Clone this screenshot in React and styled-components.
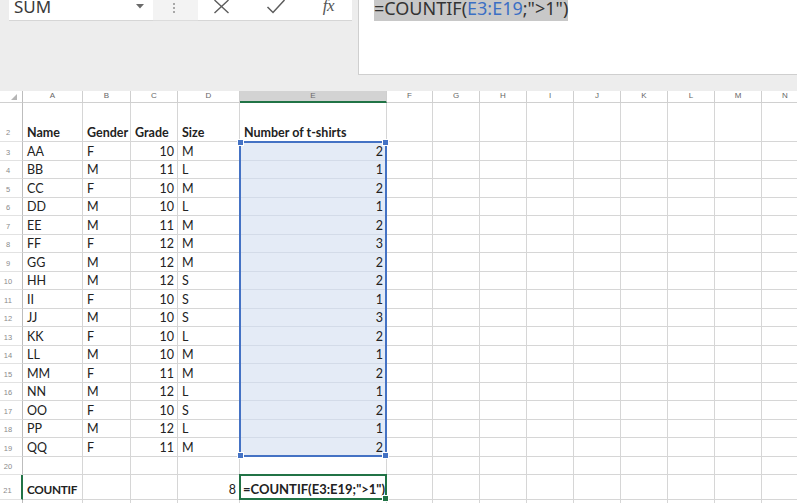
import React from 'react';
import styled, { createGlobalStyle } from 'styled-components';

const Global = createGlobalStyle`
  html, body { margin: 0; padding: 0; background: #fff; overflow: hidden; }
  body { width: 797px; height: 503px; font-family: Lato, "Liberation Sans", sans-serif; }
`;

const Page = styled.div`
  width: 797px;
  height: 503px;
  overflow: hidden;
  background: #fff;
`;

const Toolbar = styled.div`
  display: flex;
  align-items: flex-start;
  background: #ededed;
  height: 99px;
  margin-top: -8px;
  padding-left: 9px;
  box-sizing: border-box;
`;

const NameBox = styled.div`
  width: 144px;
  height: 29px;
  background: #fff;
  border-bottom: 1px solid #d6d6d6;
  box-sizing: border-box;
  display: flex;
  align-items: center;
  justify-content: space-between;
  padding: 0 9px 0 5px;
  font-family: "Noto Sans", "Open Sans", sans-serif;
  font-size: 17px;
  color: #3a3a3a;
`;

const Grip = styled.div`
  width: 45px;
  height: 29px;
  background: #f3f3f3;
  border-bottom: 1px solid #dcdcdc;
  box-sizing: border-box;
  display: flex;
  flex-direction: column;
  align-items: center;
  justify-content: center;
  gap: 2px;
  padding: 4px 3px 0 0;
`;

const Dot = styled.span`
  width: 2px;
  height: 2px;
  background: #a8a8a8;
`;

const FuncBox = styled.div`
  width: 154px;
  height: 29px;
  background: #fff;
  border-bottom: 1px solid #d6d6d6;
  box-sizing: border-box;
  display: flex;
  align-items: center;
  justify-content: space-between;
  padding: 0 18px 0 15px;
  color: #5a5a5a;
`;

const Fx = styled.span`
  font-family: "Liberation Serif", "DejaVu Serif", serif;
  font-style: italic;
  font-size: 17px;
  color: #555;
  letter-spacing: -0.5px;
`;

const FormulaBox = styled.div`
  flex: 1;
  margin-left: 6px;
  height: 83px;
  background: #fff;
  border-left: 1px solid #cfcfcf;
  border-bottom: 1px solid #cfcfcf;
  box-sizing: border-box;
  padding: 7px 0 0 15px;
  font-family: "Noto Sans", "Open Sans", sans-serif;
  font-size: 18px;
  line-height: 18px;
  color: #333;
`;

const Selected = styled.span`
  background: #c8c8c8;
  padding-bottom: 1px;
`;

const Ref = styled.span`
  color: #3b6fc4;
`;

const Sheet = styled.div`
  position: relative;
  display: grid;
  grid-template-columns: 23px 60px 48px 47px 62px 147px 46px repeat(8, 47px);
  grid-template-rows: 12px 39px repeat(18, 18.5px) 25px 20px;
`;

const Corner = styled.div`
  background: #fff;
  border-right: 1px solid #bdbdbd;
  border-bottom: 1px solid #d0d0d0;
  box-sizing: border-box;
  display: flex;
  align-items: flex-end;
  justify-content: flex-end;
  padding: 0 5px 2px 0;
`;

const ColHead = styled.div`
  background: ${(p) => (p.$active ? '#d3d3d3' : '#fff')};
  border-right: 1px solid #cfcfcf;
  border-bottom: ${(p) => (p.$active ? '2px solid #217346' : '1px solid #d0d0d0')};
  box-sizing: border-box;
  font-size: 8px;
  line-height: 10px;
  color: ${(p) => (p.$active ? '#6a6a6a' : '#666')};
  text-align: center;
  font-family: "Liberation Sans", sans-serif;
`;

const RowHead = styled.div`
  background: #fff;
  border-right: ${(p) => (p.$active ? '2px solid #217346' : '1px solid #bdbdbd')};
  border-bottom: 1px solid #e2e2e2;
  box-sizing: border-box;
  font-size: 7.5px;
  color: #8a8a8a;
  display: flex;
  align-items: flex-end;
  justify-content: center;
  padding: 0 6px ${(p) => (p.$tall ? '4px' : '3px')} 0;
  font-family: "Liberation Sans", sans-serif;
`;

const Cell = styled.div`
  background: ${(p) => (p.$fill ? '#e4ebf6' : '#fff')};
  border-right: 1px solid #d6d6d6;
  border-bottom: 1px solid ${(p) => (p.$fill ? '#d3dbe8' : '#d6d6d6')};
  box-sizing: border-box;
  display: flex;
  align-items: flex-end;
  justify-content: ${(p) => (p.$right ? 'flex-end' : 'flex-start')};
  padding: 0 3px ${(p) => (p.$pb ?? 1)}px ${(p) => (p.$pl ?? 4)}px;
  font-size: ${(p) => (p.$size || 12.5)}px;
  letter-spacing: ${(p) => (p.$ls || 0)}px;
  line-height: 15px;
  font-weight: ${(p) => (p.$bold ? 700 : 400)};
  color: #222;
  white-space: nowrap;
  min-width: 0;
`;

/* absolutely positioned grid children: the grid area is their containing block,
   so they lie over the cells without taking part in auto placement */
const Frame = styled.div`
  position: absolute;
  grid-column: ${(p) => p.$col} / span 1;
  grid-row: ${(p) => p.$r1} / ${(p) => p.$r2};
  top: -1px;
  left: -1px;
  right: 0;
  bottom: 0;
  border: 2px solid ${(p) => p.$color};
  pointer-events: none;
  z-index: 2;
`;

const Handle = styled.span`
  position: absolute;
  width: 5px;
  height: 5px;
  background: ${(p) => p.$color};
  border: 1px solid #fff;
  ${(p) => (p.$y === 't' ? 'top: -4px;' : 'bottom: -4px;')}
  ${(p) => (p.$x === 'l' ? 'left: -4px;' : 'right: -4px;')}
`;

const cols = ['A', 'B', 'C', 'D', 'E', 'F', 'G', 'H', 'I', 'J', 'K', 'L', 'M', 'N'];

const data = [
  ['AA', 'F', 10, 'M', 2],
  ['BB', 'M', 11, 'L', 1],
  ['CC', 'F', 10, 'M', 2],
  ['DD', 'M', 10, 'L', 1],
  ['EE', 'M', 11, 'M', 2],
  ['FF', 'F', 12, 'M', 3],
  ['GG', 'M', 12, 'M', 2],
  ['HH', 'M', 12, 'S', 2],
  ['II', 'F', 10, 'S', 1],
  ['JJ', 'M', 10, 'S', 3],
  ['KK', 'F', 10, 'L', 2],
  ['LL', 'M', 10, 'M', 1],
  ['MM', 'F', 11, 'M', 2],
  ['NN', 'M', 12, 'L', 1],
  ['OO', 'F', 10, 'S', 2],
  ['PP', 'M', 12, 'L', 1],
  ['QQ', 'F', 11, 'M', 2],
];

const BLUE = '#4472c4';
const GREEN = '#217346';

function emptyCells(key, from) {
  const out = [];
  for (let i = from; i < cols.length; i++) {
    out.push(<Cell key={`${key}-${i}`} />);
  }
  return out;
}

export default function App() {
  const rows = [];

  rows.push(<RowHead key="rh2" $tall>2</RowHead>);
  ['Name', 'Gender', 'Grade', 'Size', 'Number of t-shirts'].forEach((t, i) => (
    rows.push(<Cell key={`h${i}`} $bold $pb={1}>{t}</Cell>)
  ));
  rows.push(...emptyCells('r2', 5));

  data.forEach((d, idx) => {
    const r = idx + 3;
    rows.push(<RowHead key={`rh${r}`}>{r}</RowHead>);
    rows.push(<Cell key={`a${r}`}>{d[0]}</Cell>);
    rows.push(<Cell key={`b${r}`}>{d[1]}</Cell>);
    rows.push(<Cell key={`c${r}`} $right>{d[2]}</Cell>);
    rows.push(<Cell key={`d${r}`}>{d[3]}</Cell>);
    rows.push(<Cell key={`e${r}`} $right $fill>{d[4]}</Cell>);
    rows.push(...emptyCells(`r${r}`, 5));
  });

  rows.push(<RowHead key="rh20">20</RowHead>);
  rows.push(...emptyCells('r20', 0));

  rows.push(<RowHead key="rh21" $active $tall>21</RowHead>);
  rows.push(<Cell key="a21" $bold $pb={2} $size={11.8} $ls={-0.3}>COUNTIF</Cell>);
  rows.push(<Cell key="b21" />);
  rows.push(<Cell key="c21" />);
  rows.push(<Cell key="d21" $right $pb={2}>8</Cell>);
  rows.push(<Cell key="e21" $bold $pb={2} $pl={3} $size={13}>=COUNTIF(E3:E19;"&gt;1")</Cell>);
  rows.push(...emptyCells('r21', 5));

  rows.push(<RowHead key="rh22">22</RowHead>);
  rows.push(...emptyCells('r22', 0));

  return (
    <Page>
      <Global />
      <Toolbar>
        <NameBox>
          <span>SUM</span>
          <svg width="8" height="5" viewBox="0 0 8 5">
            <path d="M0 0 L8 0 L4 4.5 Z" fill="#6a6a6a" />
          </svg>
        </NameBox>
        <Grip>
          <Dot />
          <Dot />
          <Dot />
        </Grip>
        <FuncBox>
          <svg width="17" height="15" viewBox="0 0 17 15">
            <path d="M1.5 1 L15.5 14 M15.5 1 L1.5 14" stroke="#5c5c5c" strokeWidth="1.4" fill="none" />
          </svg>
          <svg width="20" height="15" viewBox="0 0 20 15">
            <path d="M1.5 8 L7 13.5 L18.5 1" stroke="#5c5c5c" strokeWidth="1.5" fill="none" />
          </svg>
          <Fx>fx</Fx>
        </FuncBox>
        <FormulaBox>
          <Selected>
            =COUNTIF(<Ref>E3:E19</Ref>;"&gt;1")
          </Selected>
        </FormulaBox>
      </Toolbar>
      <Sheet>
        <Corner>
          <svg width="6" height="6" viewBox="0 0 6 6">
            <path d="M6 0 L6 6 L0 6 Z" fill="#b5b5b5" />
          </svg>
        </Corner>
        {cols.map((c, i) => (
          <ColHead key={c} $active={i === 4}>{c}</ColHead>
        ))}
        {rows}
        <Frame $col={6} $r1={3} $r2={20} $color={BLUE}>
          <Handle $color={BLUE} $x="l" $y="t" />
          <Handle $color={BLUE} $x="r" $y="t" />
          <Handle $color={BLUE} $x="l" $y="b" />
          <Handle $color={BLUE} $x="r" $y="b" />
        </Frame>
        <Frame $col={6} $r1={21} $r2={22} $color={GREEN}>
          <Handle $color={GREEN} $x="r" $y="b" />
        </Frame>
      </Sheet>
    </Page>
  );
}
